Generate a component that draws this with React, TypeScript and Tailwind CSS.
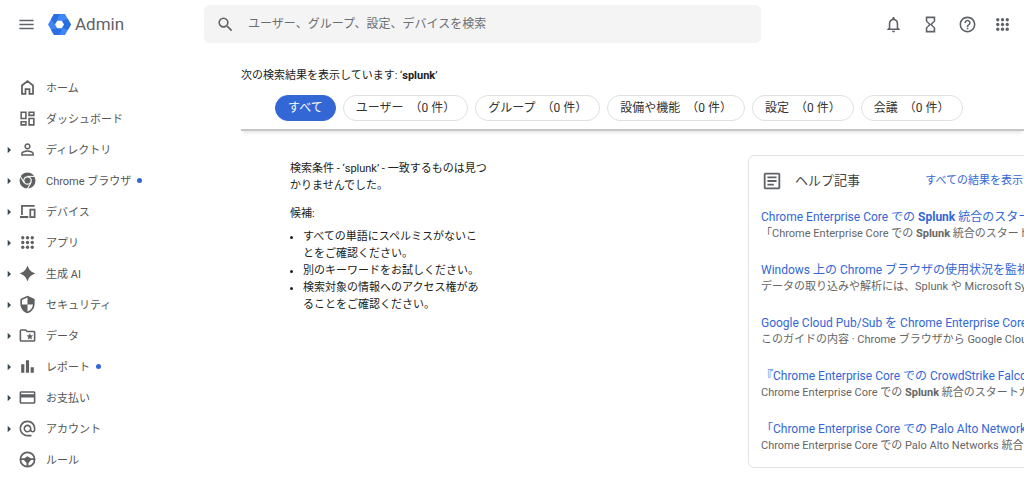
import React from 'react';
import type { IconType } from 'react-icons';
import {
  MdAlternateEmail,
  MdArrowRight,
  MdBarChart,
  MdHelpOutline,
  MdHourglassEmpty,
  MdMenu,
  MdNotificationsNone,
  MdOutlineArticle,
  MdOutlineDashboard,
  MdOutlineFolderSpecial,
  MdPayment,
  MdPersonOutline,
  MdSearch,
  MdSecurity,
} from 'react-icons/md';
import { clsx } from 'clsx';

interface IconProps {
  className?: string;
}

const HomeIcon: React.FC<IconProps> = ({ className }) => (
  <svg viewBox="0 0 24 24" fill="none" stroke="currentColor" strokeWidth="2.2" className={className}>
    <path d="M5 9.500 12 4l7 5.500V20h-4.500v-6h-5v6H5z" />
  </svg>
);

const ChromeIcon: React.FC<IconProps> = ({ className }) => (
  <svg viewBox="0 0 24 24" fill="none" stroke="currentColor" className={className}>
    <circle cx="12" cy="12" r="7.800" strokeWidth="4.600" />
    <circle cx="12" cy="12" r="3.900" fill="currentColor" stroke="none" />
    <g stroke="#fff" strokeWidth="1.300">
      <path d="M12 6.800h11" />
      <path d="M12 6.800h11" transform="rotate(120 12 12)" />
      <path d="M12 6.800h11" transform="rotate(240 12 12)" />
    </g>
  </svg>
);

const DevicesIcon: React.FC<IconProps> = ({ className }) => (
  <svg viewBox="0 0 24 24" fill="none" stroke="currentColor" strokeWidth="2.2" className={className}>
    <path d="M5 16.500V5h16" />
    <path d="M2.500 19H13" strokeWidth="2.6" />
    <path d="M15.500 9.500h5.500V19h-5.500z" />
  </svg>
);

const AppsIcon: React.FC<IconProps> = ({ className }) => (
  <svg viewBox="0 0 24 24" fill="currentColor" className={className}>
    {[6, 12, 18].map((y) => [6, 12, 18].map((x) => <circle key={`${x}-${y}`} cx={x} cy={y} r="2.1" />))}
  </svg>
);

const SparkIcon: React.FC<IconProps> = ({ className }) => (
  <svg viewBox="0 0 24 24" fill="currentColor" className={className}>
    <path d="M12 2c1.800 5.500 4.500 8.200 10 10-5.500 1.800-8.200 4.500-10 10-1.800-5.500-4.500-8.200-10-10 5.500-1.800 8.200-4.500 10-10z" />
  </svg>
);

const WheelIcon: React.FC<IconProps> = ({ className }) => (
  <svg viewBox="0 0 24 24" fill="currentColor" className={className}>
    <circle cx="12" cy="12" r="9" fill="none" stroke="currentColor" strokeWidth="2.200" />
    <path d="M3 10.500h5L12 8l4 2.500h5v2.200h-4.500L13.200 16.500V21h-2.400v-4.500L7.500 12.700H3z" />
  </svg>
);

const AdminLogo: React.FC<IconProps> = ({ className }) => (
  <svg viewBox="0 0 46 42" className={className}>
    <path fill="#4285f4" d="M12 0h22l12 21-12 21H12L0 21z" />
    <path fill="#2a6fe0" d="M12 0h11l-5 14-4 7-8-10.500z" />
    <path fill="#2a6fe0" d="m46 21-6 10.500L27 28l4-7-4-7 13-3.500z" />
    <path fill="#2a6fe0" d="M12 42 6 31.500 19 28h9l-5 14z" />
    <path fill="#fff" d="M18.500 13.500h9L32 21l-4.500 7.500h-9L14 21z" />
  </svg>
);

interface NavItem {
  label: string;
  icon: IconType | React.FC<IconProps>;
  expandable?: boolean;
  isNew?: boolean;
}

const navItems: NavItem[] = [
  { label: 'ホーム', icon: HomeIcon },
  { label: 'ダッシュボード', icon: MdOutlineDashboard },
  { label: 'ディレクトリ', icon: MdPersonOutline, expandable: true },
  { label: 'Chrome ブラウザ', icon: ChromeIcon, expandable: true, isNew: true },
  { label: 'デバイス', icon: DevicesIcon, expandable: true },
  { label: 'アプリ', icon: AppsIcon, expandable: true },
  { label: '生成 AI', icon: SparkIcon, expandable: true },
  { label: 'セキュリティ', icon: MdSecurity, expandable: true },
  { label: 'データ', icon: MdOutlineFolderSpecial, expandable: true },
  { label: 'レポート', icon: MdBarChart, expandable: true, isNew: true },
  { label: 'お支払い', icon: MdPayment, expandable: true },
  { label: 'アカウント', icon: MdAlternateEmail, expandable: true },
  { label: 'ルール', icon: WheelIcon },
];

const filters = [
  { label: 'すべて' },
  { label: 'ユーザー', count: 0 },
  { label: 'グループ', count: 0 },
  { label: '設備や機能', count: 0 },
  { label: '設定', count: 0 },
  { label: '会議', count: 0 },
];

const headerActions = [
  { label: '通知', icon: MdNotificationsNone },
  { label: 'タスク', icon: MdHourglassEmpty },
  { label: 'ヘルプ', icon: MdHelpOutline },
  { label: 'アプリ', icon: AppsIcon },
];

const articles = [
  {
    title: <>Chrome Enterprise Core での <b>Splunk</b> 統合のスタートガイド</>,
    summary: <>「Chrome Enterprise Core での <b>Splunk</b> 統合のスタートガイド</>,
  },
  {
    title: <>Windows 上の Chrome ブラウザの使用状況を監視する</>,
    summary: <>データの取り込みや解析には、Splunk や Microsoft System Center</>,
  },
  {
    title: <>Google Cloud Pub/Sub を Chrome Enterprise Core</>,
    summary: <>このガイドの内容 · Chrome ブラウザから Google Cloud Pub/Sub</>,
  },
  {
    title: <>『Chrome Enterprise Core での CrowdStrike Falcon</>,
    summary: <>Chrome Enterprise Core での <b>Splunk</b> 統合のスタートガイド</>,
  },
  {
    title: <>「Chrome Enterprise Core での Palo Alto Networks</>,
    summary: <>Chrome Enterprise Core での Palo Alto Networks 統合のスタート</>,
  },
];

const Header: React.FC = () => (
  <header className="flex h-12 items-center text-[#5f6368]">
    <div className="flex w-51 shrink-0 items-center pl-[17px]">
      <button type="button" aria-label="メインメニュー">
        <MdMenu className="size-[19px]" />
      </button>
      <a href="#home" className="ml-3 flex items-center gap-1">
        <AdminLogo className="h-[21px] w-[23px]" />
        <span className="text-[17px] leading-6">Admin</span>
      </a>
    </div>
    <label className="flex h-[38px] max-w-[557px] flex-1 items-center gap-[13px] rounded-md bg-[#f4f4f4] pl-3">
      <MdSearch className="size-[19px] shrink-0" />
      <input
        type="search"
        aria-label="検索"
        placeholder="ユーザー、グループ、設定、デバイスを検索"
        className="min-w-0 flex-1 bg-transparent text-xs outline-none placeholder:text-[#6b6e72]"
      />
    </label>
    <div className="ml-auto flex pr-[5px]">
      {headerActions.map(({ label, icon: Icon }) => (
        <button
          key={label}
          type="button"
          aria-label={label}
          className="flex w-[37px] justify-center last:w-[33px]"
        >
          <Icon className="size-[19px]" />
        </button>
      ))}
    </div>
  </header>
);

const Sidebar: React.FC = () => (
  <nav className="w-51 shrink-0 pt-6" aria-label="メイン">
    <ul>
      {navItems.map(({ label, icon: Icon, expandable, isNew }) => (
        <li key={label}>
          <a href="#nav" className="flex h-[31px] items-center text-[11px] text-[#555]">
            <span className="flex w-[18px] shrink-0 justify-center">
              {expandable && <MdArrowRight className="size-4 text-[#37474f]" />}
            </span>
            <Icon className="size-[19px] shrink-0 text-[#5f6062]" />
            <span className="ml-[9px] pt-1">{label}</span>
            {isNew && <span className="ml-1.5 size-[5px] rounded-full bg-[#3367d6]" />}
          </a>
        </li>
      ))}
    </ul>
  </nav>
);

const HelpArticles: React.FC = () => (
  <section className="w-72 shrink-0 rounded-md border border-[#e2e2e2] pt-3 pb-[13px]">
    <div className="flex h-[26px] items-center px-3">
      <MdOutlineArticle className="size-[22px] text-[#5f6368]" />
      <h2 className="ml-3 text-[13px] text-[#444]">ヘルプ記事</h2>
      <a href="#all" className="ml-auto text-[11px] text-[#3367d6]">すべての結果を表示</a>
    </div>
    <ul className="mt-3.5 flex flex-col gap-[19px] overflow-hidden pl-3 whitespace-nowrap">
      {articles.map(({ title, summary }, i) => (
        <li key={i}>
          <a href="#article" className="block text-xs leading-[18px] text-[#3367d6]">{title}</a>
          <p className="text-[11px] leading-4 text-[#666]">{summary}</p>
        </li>
      ))}
    </ul>
  </section>
);

const App: React.FC = () => {
  return (
    <div className="min-h-screen overflow-hidden bg-white font-['Roboto','Noto_Sans_CJK_JP',sans-serif] text-[#212121]">
      <Header />
      <div className="flex">
        <Sidebar />
        <main className="min-w-0 flex-1 pl-[37px]">
          <h1 className="pt-[19px] text-[11px] leading-[17px]">
            次の検索結果を表示しています: ‘<b>splunk</b>’
          </h1>
          <div className="flex gap-[7px] border-b-2 border-[#c6c6c6] pt-[11px] pb-2 pl-[34px] shadow-[0_4px_3px_-2px_#0000001a]">
            {filters.map(({ label, count }, i) => (
              <button
                key={label}
                type="button"
                className={clsx(
                  'flex h-[26px] shrink-0 items-center gap-1.5 rounded-full border px-3 text-xs whitespace-nowrap',
                  i === 0
                    ? 'border-[#3367d6] bg-[#3367d6] text-white'
                    : 'border-[#e0e0e0] bg-white text-[#333]'
                )}
              >
                <span>{label}</span>
                {count !== undefined && <span>（{count} 件）</span>}
              </button>
            ))}
          </div>
          <div className="flex items-start justify-between pt-6 pl-[49px]">
            <div className="w-[198px] shrink-0 pt-[5px] text-[11px] leading-[17px]">
              <p>検索条件 - ‘splunk’ - 一致するものは見つかりませんでした。</p>
              <p className="mt-[11px]">候補:</p>
              <ul className="mt-1.5 list-disc pl-[13px]">
                <li>すべての単語にスペルミスがないことをご確認ください。</li>
                <li>別のキーワードをお試しください。</li>
                <li>検索対象の情報へのアクセス権があることをご確認ください。</li>
              </ul>
            </div>
            <div className="w-[276px] shrink-0">
              <HelpArticles />
            </div>
          </div>
        </main>
      </div>
    </div>
  );
};

export default App;
